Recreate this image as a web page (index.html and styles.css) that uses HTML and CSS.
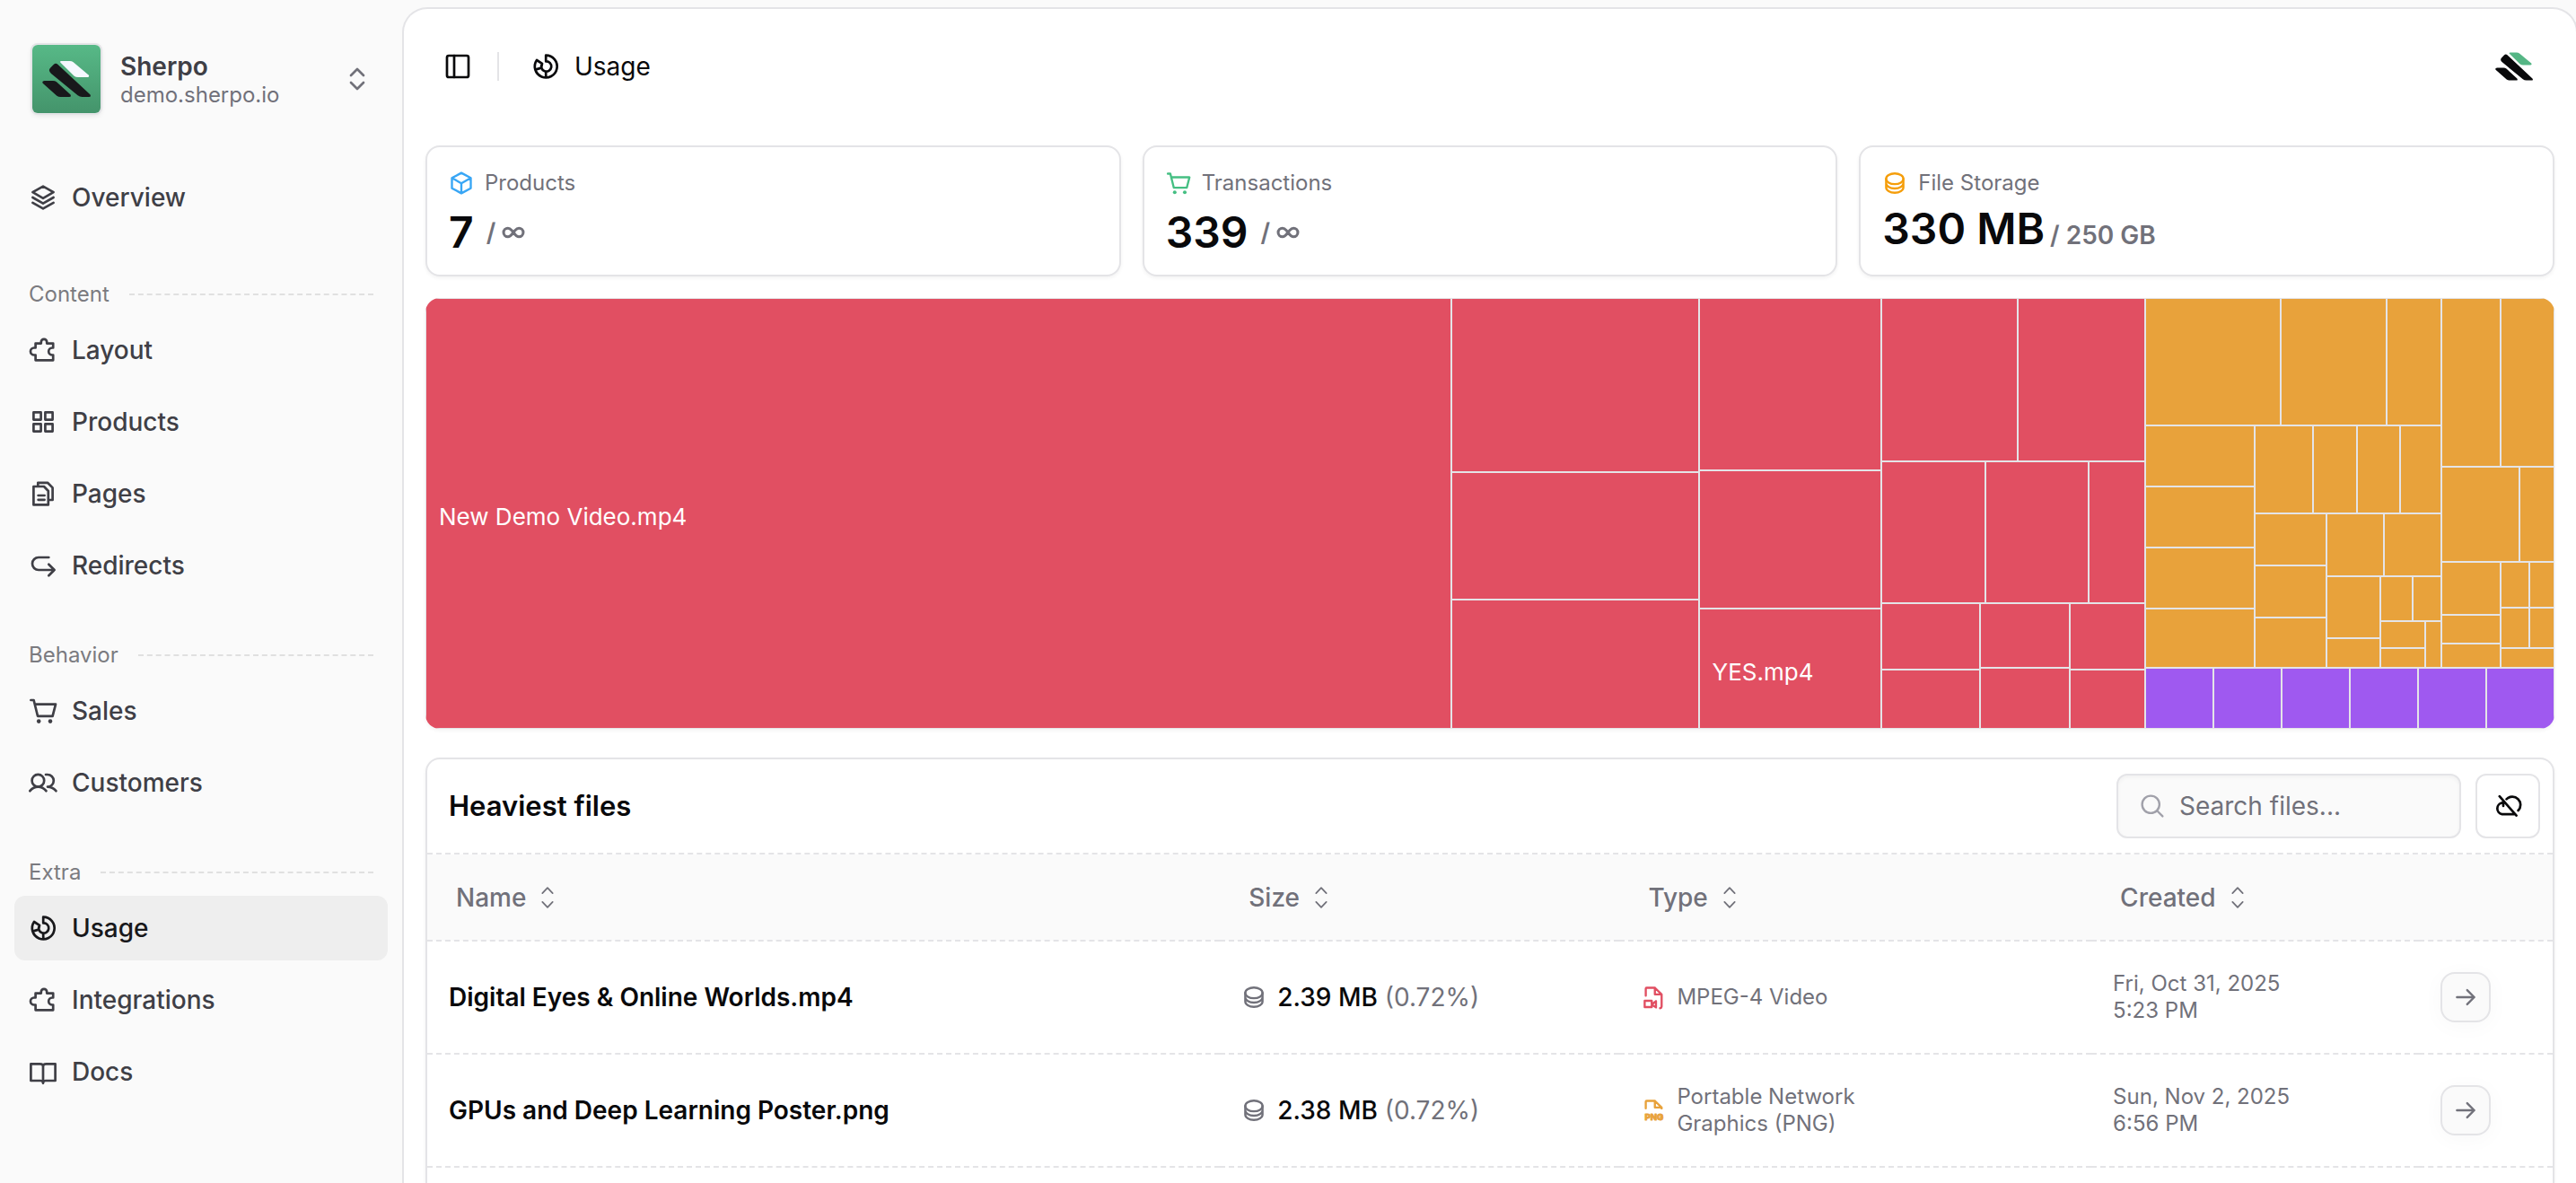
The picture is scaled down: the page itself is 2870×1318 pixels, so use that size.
FILE: index.html
```html
<!DOCTYPE html>
<html lang="en">
<head>
    <meta charset="UTF-8">
    <title>Usage - Sherpo</title>
    <link rel="stylesheet" href="styles.css">
</head>

<body>
    <!-- icon set -->
    <svg class="sprite" aria-hidden="true">
        <symbol id="i-logo" viewBox="0 0 162 120">
            <path class="logo-top" d="M64 0H92Q99 0 104 4L154 46Q160 53 152 54H120Q112 54 107 50L62 6Q57 0 64 0Z"/>
            <path class="logo-base" d="M38 12Q45 5 52 11L160 112Q165 120 156 120H134Q125 120 119 115L30 42Q19 32 27 23ZM8 66H36Q43 66 48 70L94 112Q99 120 90 120H62Q54 120 49 116L2 74Q-2 67 8 66Z"/>
        </symbol>
        <symbol id="i-layers" viewBox="0 0 32 32">
            <path d="M16 3.6 27.6 10.2 16 16.8 4.4 10.2ZM4.4 16 16 22.6 27.6 16M4.4 21.8 16 28.4 27.6 21.8"/>
        </symbol>
        <symbol id="i-puzzle" viewBox="0 0 32 32">
            <path d="M7.6 8.6H13.8V7a3.2 3.2 0 0 1 6.4 0V8.6H27.2V13.5H26.2a4 4 0 0 0 0 8H27.2V27.3H7.6V21.5H6a4 4 0 0 1 0-8H7.6Z"/>
        </symbol>
        <symbol id="i-grid" viewBox="0 0 32 32">
            <path d="M5.4 5.4h8.2v8.2H5.4ZM18.4 5.4h8.2v8.2h-8.2ZM5.4 18.4h8.2v8.2H5.4ZM18.4 18.4h8.2v8.2h-8.2Z"/>
        </symbol>
        <symbol id="i-pages" viewBox="0 0 32 32">
            <path d="M5.4 8H17L21.8 13V28.4H5.4ZM10.3 8V3.8H21L26.6 9.4V23H22M10.6 18h7M10.6 22.8h7"/>
        </symbol>
        <symbol id="i-redirect" viewBox="0 0 32 32">
            <path d="M22.3 7H11a7 7 0 0 0 0 14H28.6M22.3 14.8 28.6 21 22.3 27.3"/>
        </symbol>
        <symbol id="i-cart" viewBox="0 0 32 32">
            <path d="M2.4 4H5.6L10 21.8H26.6L30 8.6H7"/>
            <circle class="dot" cx="11.2" cy="27.6" r="2.3"/>
            <circle class="dot" cx="24" cy="27.6" r="2.3"/>
        </symbol>
        <symbol id="i-users" viewBox="0 0 32 32">
            <circle cx="10.4" cy="13.7" r="6.8"/>
            <path d="M1.4 25.2C4 22 7 20.6 10.4 20.6S16.9 22 19.4 25.2M19 7H21a6.8 6.8 0 0 1 0 13.6C24.6 20.6 27.6 22 30.4 25.2"/>
        </symbol>
        <symbol id="i-usage" viewBox="0 0 32 32">
            <path d="M16.2 3.6A12.4 12.4 0 1 1 6 9L12 12.9A5.6 5.6 0 1 0 16.2 10.4ZM16.2 21.6V28.4M11 17.6 4.4 19.6M12 12.9 11 17.6"/>
        </symbol>
        <symbol id="i-book" viewBox="0 0 32 32">
            <path d="M2.4 7.3H12.5Q16 7.3 16 10Q16 7.3 19.5 7.3H29.6V26H19Q16 26 16 28.8Q16 26 13 26H2.4ZM16 10V28"/>
        </symbol>
        <symbol id="i-panel" viewBox="0 0 32 32">
            <rect x="4" y="4" width="24" height="24" rx="2"/>
            <path d="M12 4V28"/>
        </symbol>
        <symbol id="i-updown" viewBox="0 0 32 32">
            <path d="M9 12 16 5 23 12M9 20 16 27 23 20"/>
        </symbol>
        <symbol id="i-sort" viewBox="0 0 32 32">
            <path d="M9.5 10.5 16 3.5 22.5 10.5M9.5 21.5 16 28.5 22.5 21.5"/>
        </symbol>
        <symbol id="i-box" viewBox="0 0 32 32">
            <path d="M16 3 28 9.5V22.5L16 29 4 22.5V9.5ZM4 9.5 16 16.2 28 9.5M16 16.2V29"/>
        </symbol>
        <symbol id="i-db" viewBox="0 0 32 32">
            <ellipse cx="16" cy="10.5" rx="11" ry="6.8"/>
            <path d="M5 10.5V21.5C5 25.3 9.9 28.3 16 28.3S27 25.3 27 21.5V10.5M5 16C5 19.8 9.9 22.8 16 22.8S27 19.8 27 16"/>
        </symbol>
        <symbol id="i-search" viewBox="0 0 32 32">
            <circle cx="14" cy="14" r="11"/>
            <path d="M22 22 29 29"/>
        </symbol>
        <symbol id="i-cloud-off" viewBox="0 0 32 32">
            <path d="M6.8 5.2 25.6 26.6M9.8 12.4A6.5 6.5 0 0 0 9.6 25.2H24.4M11 10.5V16M14.6 8.4A8.6 8.6 0 0 1 27.6 21"/>
        </symbol>
        <symbol id="i-arrow" viewBox="0 0 32 32">
            <path d="M5 16H27M18 7 27 16 18 25"/>
        </symbol>
        <symbol id="i-infinity" viewBox="0 0 32 32">
            <path d="M16 16C13 11.8 11 10.5 9 10.5a5.5 5.5 0 0 0 0 11C11 21.5 13 20.2 16 16S21 10.5 23 10.5a5.5 5.5 0 0 1 0 11C21 21.5 19 20.2 16 16Z"/>
        </symbol>
        <symbol id="i-file-video" viewBox="0 0 32 32">
            <path d="M6.4 14V5.2Q6.4 4 7.6 4H18L26.6 12.4V28Q26.6 29.6 24.6 30M18 4V12.4H26.6M5 20.6H14V28.6H5ZM14 25.4 19.4 21V29L14 25.4"/>
        </symbol>
        <symbol id="i-file-png" viewBox="0 0 32 32">
            <path d="M6.4 13.5V5.2Q6.4 4 7.6 4H18L26.6 12.4V13.6M18 4V12.4H26.6"/>
            <text class="file-ext" x="17" y="28" text-anchor="middle">PNG</text>
        </symbol>
    </svg>

    <div class="app">
        <aside class="sidebar">
            <button class="store" type="button">
                <span class="store-logo"><svg><use href="#i-logo"/></svg></span>
                <span class="store-text">
                    <strong>Sherpo</strong>
                    <small>demo.sherpo.io</small>
                </span>
                <svg class="icon store-arrows"><use href="#i-updown"/></svg>
            </button>

            <nav class="nav">
                <div class="nav-group nav-first">
                    <a href="#"><svg class="icon"><use href="#i-layers"/></svg>Overview</a>
                </div>
                <div class="nav-group">
                    <h2>Content</h2>
                    <a href="#"><svg class="icon"><use href="#i-puzzle"/></svg>Layout</a>
                    <a href="#"><svg class="icon"><use href="#i-grid"/></svg>Products</a>
                    <a href="#"><svg class="icon"><use href="#i-pages"/></svg>Pages</a>
                    <a href="#"><svg class="icon"><use href="#i-redirect"/></svg>Redirects</a>
                </div>
                <div class="nav-group">
                    <h2>Behavior</h2>
                    <a href="#"><svg class="icon"><use href="#i-cart"/></svg>Sales</a>
                    <a href="#"><svg class="icon"><use href="#i-users"/></svg>Customers</a>
                </div>
                <div class="nav-group">
                    <h2>Extra</h2>
                    <a href="#" class="active"><svg class="icon"><use href="#i-usage"/></svg>Usage</a>
                    <a href="#"><svg class="icon"><use href="#i-puzzle"/></svg>Integrations</a>
                    <a href="#"><svg class="icon"><use href="#i-book"/></svg>Docs</a>
                </div>
            </nav>
        </aside>

        <main class="main">
            <header class="topbar">
                <button type="button" class="toggle" aria-label="Toggle sidebar"><svg class="icon"><use href="#i-panel"/></svg></button>
                <span class="divider"></span>
                <svg class="icon"><use href="#i-usage"/></svg>
                <h1>Usage</h1>
                <a href="#" class="brand" aria-label="Sherpo"><svg><use href="#i-logo"/></svg></a>
            </header>

            <section class="stats">
                <div class="card stat">
                    <div class="stat-label"><svg class="icon blue"><use href="#i-box"/></svg>Products</div>
                    <div class="stat-value unlimited">7 <span class="limit">/ <svg class="icon" role="img" aria-label="unlimited"><use href="#i-infinity"/></svg></span></div>
                </div>
                <div class="card stat">
                    <div class="stat-label"><svg class="icon green"><use href="#i-cart"/></svg>Transactions</div>
                    <div class="stat-value unlimited">339 <span class="limit">/ <svg class="icon" role="img" aria-label="unlimited"><use href="#i-infinity"/></svg></span></div>
                </div>
                <div class="card stat">
                    <div class="stat-label"><svg class="icon orange"><use href="#i-db"/></svg>File Storage</div>
                    <div class="stat-value">330 MB <span class="limit">/ 250 GB</span></div>
                </div>
            </section>

            <div id="treemap" class="treemap"></div>

            <section class="card files">
                <div class="files-head">
                    <h2>Heaviest files</h2>
                    <label class="search">
                        <svg class="icon"><use href="#i-search"/></svg>
                        <input type="text" placeholder="Search files..." aria-label="Search files">
                    </label>
                    <button type="button" class="cloud" aria-label="Unused files"><svg class="icon"><use href="#i-cloud-off"/></svg></button>
                </div>
                <table>
                    <thead>
                        <tr>
                            <th class="c-name"><button type="button">Name<svg class="icon"><use href="#i-sort"/></svg></button></th>
                            <th class="c-size"><button type="button">Size<svg class="icon"><use href="#i-sort"/></svg></button></th>
                            <th class="c-type"><button type="button">Type<svg class="icon"><use href="#i-sort"/></svg></button></th>
                            <th class="c-date"><button type="button">Created<svg class="icon"><use href="#i-sort"/></svg></button></th>
                            <th></th>
                        </tr>
                    </thead>
                    <tbody>
                        <tr>
                            <td class="name">Digital Eyes &amp; Online Worlds.mp4</td>
                            <td><div class="cell"><svg class="icon"><use href="#i-db"/></svg><span class="size"><b>2.39 MB</b> (0.72%)</span></div></td>
                            <td><div class="cell"><svg class="icon red"><use href="#i-file-video"/></svg><span class="type">MPEG-4 Video</span></div></td>
                            <td class="date">Fri, Oct 31, 2025<br>5:23 PM</td>
                            <td><button type="button" class="open" aria-label="Open"><svg class="icon"><use href="#i-arrow"/></svg></button></td>
                        </tr>
                        <tr>
                            <td class="name">GPUs and Deep Learning Poster.png</td>
                            <td><div class="cell"><svg class="icon"><use href="#i-db"/></svg><span class="size"><b>2.38 MB</b> (0.72%)</span></div></td>
                            <td><div class="cell"><svg class="icon amber"><use href="#i-file-png"/></svg><span class="type">Portable Network Graphics (PNG)</span></div></td>
                            <td class="date">Sun, Nov 2, 2025<br>6:56 PM</td>
                            <td><button type="button" class="open" aria-label="Open"><svg class="icon"><use href="#i-arrow"/></svg></button></td>
                        </tr>
                    </tbody>
                </table>
            </section>
        </main>
    </div>

    <script>
        // [size, dir, children] is a split, [size, label] a file, a bare number a file without label
        const video = [1916, 'row', [
            [1142, 'New Demo Video.mp4'],
            [276, 'col', [194, 142, 144]],
            [204, 'col', [192, 154, [134, 'YES.mp4']]],
            [294, 'col', [
                [182, 'row', [152, 142]],
                [158, 'row', [116, 116, 62]],
                [140, 'row', [
                    [110, 'col', [74, 66]],
                    [100, 'col', [72, 68]],
                    [84, 'col', [74, 66]]
                ]]
            ]]
        ]];
        const image = [412, 'row', [
            [330, 'col', [
                [142, 'row', [152, 118, 60]],
                [270, 'row', [
                    [122, 'col', [68, 68, 68, 66]],
                    [208, 'col', [
                        [98, 'row', [66, 48, 48, 46]],
                        [172, 'row', [
                            [80, 'col', [58, 58, 56]],
                            [128, 'col', [
                                [70, 'row', [64, 64]],
                                [102, 'row', [
                                    [60, 'col', [70, 32]],
                                    [68, 'col', [
                                        [50, 'row', [36, 32]],
                                        [52, 'row', [[52, 'col', [30, 22]], 16]]
                                    ]]
                                ]]
                            ]]
                        ]]
                    ]]
                ]]
            ]],
            [126, 'col', [
                [188, 'row', [66, 60]],
                [106, 'row', [88, 38]],
                [118, 'row', [
                    [66, 'col', [60, 32, 26]],
                    [60, 'col', [
                        [52, 'row', [32, 28]],
                        [46, 'row', [32, 28]],
                        20
                    ]]
                ]]
            ]]
        ]];
        const archive = [68, 'row', [76, 76, 76, 76, 76, 76]];

        function draw(node, kind) {
            const item = Array.isArray(node) ? node : [node];
            const el = document.createElement('div');
            el.style.flexGrow = item[0];
            if (item[2]) {
                el.className = 'split ' + item[1];
                item[2].forEach(child => el.appendChild(draw(child, kind)));
            } else {
                el.className = 'file ' + kind;
                if (item[1]) {
                    const label = document.createElement('span');
                    label.textContent = item[1];
                    el.appendChild(label);
                }
            }
            return el;
        }

        const treemap = document.getElementById('treemap');
        const rest = document.createElement('div');
        rest.className = 'split col';
        rest.style.flexGrow = 456;
        rest.appendChild(draw(image, 'image'));
        rest.appendChild(draw(archive, 'archive'));
        treemap.appendChild(draw(video, 'video'));
        treemap.appendChild(rest);
    </script>
</body>
</html>
```

FILE: styles.css
```css
* {
    box-sizing: border-box;
}

body {
    margin: 0;
    background-color: #fafafa;
    color: #09090b;
    font-family: Inter, "Liberation Sans", sans-serif;
    font-size: 28px;
    line-height: 36px;
    overflow: hidden;
}

h1, h2 {
    margin: 0;
}

a {
    color: inherit;
    text-decoration: none;
}

button {
    display: flex;
    align-items: center;
    padding: 0;
    border: none;
    background: none;
    color: inherit;
    font: inherit;
    cursor: pointer;
}

.sprite {
    display: none;
}

.icon {
    flex: none;
    width: 32px;
    height: 32px;
    fill: none;
    stroke: currentColor;
    stroke-width: 2.7;
    stroke-linecap: round;
    stroke-linejoin: round;
}

.dot {
    fill: currentColor;
    stroke: none;
}

.file-ext {
    fill: currentColor;
    stroke-width: 1;
    font-size: 11px;
    font-weight: 800;
}

.blue { color: #38a6f5; }
.green { color: #45bf83; }
.orange { color: #f59e0b; }
.red { color: #e14f62; }
.amber { color: #e8a23b; }

.app {
    display: flex;
    min-height: 100vh;
}

/* sidebar */
.sidebar {
    flex: none;
    width: 448px;
    padding: 50px 16px 0;
    color: #3f3f46;
}

.store {
    width: 100%;
    padding: 0 18px 0 20px;
    text-align: left;
}

.store-logo {
    display: flex;
    align-items: center;
    justify-content: center;
    width: 76px;
    height: 76px;
    border-radius: 6px;
    background: linear-gradient(#57b987, #44946b);
    box-shadow: 0 0 0 2px #e4e4e7, 0 2px 6px rgba(0, 0, 0, 0.12);
}

.store-logo svg {
    width: 54px;
    height: 40px;
    fill: #18181b;
    --logo-top: #f5f8ff;
}

.logo-top {
    fill: var(--logo-top);
}

.store-text {
    flex: 1;
    margin-left: 22px;
    padding-top: 2px;
}

.store-text strong {
    display: block;
    font-weight: 600;
    line-height: 34px;
}

.store-text small {
    display: block;
    color: #71717a;
    font-size: 24px;
    line-height: 30px;
}

.store-arrows {
    color: #71717a;
}

.nav {
    display: flex;
    flex-direction: column;
    gap: 38px;
    margin-top: 58px;
}

.nav-first {
    margin-bottom: 8px;
}

.nav-group h2 {
    display: flex;
    align-items: center;
    gap: 22px;
    height: 52px;
    padding: 0 16px;
    color: #7b7b80;
    font-size: 24px;
    font-weight: 400;
}

.nav-group h2::after {
    content: "";
    flex: 1;
    border-top: 2px dashed #e0e0e0;
}

.nav-group a {
    display: flex;
    align-items: center;
    gap: 16px;
    height: 72px;
    padding: 0 16px;
    border-radius: 12px;
    font-weight: 500;
}

.nav-group a + a {
    margin-top: 8px;
}

.nav-group a.active {
    background-color: #eeeeee;
    color: #18181b;
}

/* main panel, its right border runs past the window edge */
.main {
    flex: 1;
    display: flex;
    flex-direction: column;
    min-width: 0;
    margin: 8px -2px 0 0;
    padding: 0 24px;
    border: 2px solid #e4e4e7;
    border-bottom: none;
    border-radius: 28px 28px 0 0;
    background-color: #ffffff;
}

.topbar {
    display: flex;
    align-items: center;
    height: 128px;
    padding: 0 24px 0 20px;
}

.divider {
    width: 2px;
    height: 32px;
    margin: 0 36px 0 28px;
    background-color: #e4e4e7;
}

.topbar h1 {
    margin-left: 16px;
    font-size: 28px;
    font-weight: 400;
}

.brand {
    display: flex;
    margin-left: auto;
}

.brand svg {
    width: 42px;
    height: 32px;
    fill: #09090b;
    --logo-top: #55b685;
}

.card {
    border: 2px solid #e4e4e7;
    border-radius: 16px;
    background-color: #ffffff;
    box-shadow: 0 2px 4px rgba(0, 0, 0, 0.05);
}

.stats {
    display: grid;
    grid-template-columns: repeat(3, 1fr);
    gap: 24px;
    margin-top: 24px;
}

.stat {
    padding: 24px 24px 16px;
}

.stat-label {
    display: flex;
    align-items: center;
    gap: 12px;
    color: #71717a;
    font-size: 24px;
    line-height: 32px;
}

.stat-label .icon {
    width: 28px;
    height: 28px;
}

.stat-value {
    display: flex;
    align-items: baseline;
    gap: 6px;
    margin-top: 8px;
    font-size: 48px;
    font-weight: 600;
    line-height: 54px;
}

.stat-value.unlimited {
    align-items: center;
    gap: 14px;
    line-height: 62px;
}

.limit {
    display: flex;
    align-items: center;
    gap: 6px;
    color: #71717a;
    font-size: 28px;
    line-height: 36px;
}

.limit .icon {
    width: 28px;
    height: 28px;
    stroke-width: 3.5;
}

/* treemap */
.treemap {
    display: flex;
    height: 480px;
    margin-top: 24px;
    border-radius: 16px;
    overflow: hidden;
    box-shadow: 0 2px 4px rgba(0, 0, 0, 0.05);
}

.split {
    display: flex;
    flex-basis: 0;
    min-width: 0;
    min-height: 0;
}

.col {
    flex-direction: column;
}

.file {
    display: flex;
    align-items: center;
    flex-basis: 0;
    min-width: 0;
    min-height: 0;
    border: 1px solid #e4e4e7;
    color: #ffffff;
    font-size: 26px;
    white-space: nowrap;
}

.file span {
    padding: 8px 0 0 14px;
}

.video { background-color: #e14f62; }
.image { background-color: #e8a23b; }
.archive { background-color: #9f59f0; }

/* files */
.files {
    flex: 1;
    margin-top: 32px;
    border-bottom: none;
    border-radius: 16px 16px 0 0;
    overflow: hidden;
}

.files-head {
    display: flex;
    align-items: center;
    gap: 16px;
    padding: 16px 14px 16px 24px;
    border-bottom: 2px dashed #e4e4e7;
}

.files-head h2 {
    margin-right: auto;
    font-size: 31px;
    font-weight: 600;
}

.search {
    display: flex;
    align-items: center;
    gap: 16px;
    width: 384px;
    height: 72px;
    padding: 0 24px;
    border: 2px solid #e4e4e7;
    border-radius: 12px;
    background-color: #fafafa;
    box-shadow: inset 0 2px 4px rgba(0, 0, 0, 0.04);
    color: #a1a1aa;
}

.search .icon {
    width: 28px;
    height: 28px;
}

.search input {
    flex: 1;
    min-width: 0;
    padding: 0;
    border: none;
    outline: none;
    background: none;
    color: #09090b;
    font: inherit;
}

.search input::placeholder {
    color: #71717a;
    opacity: 1;
}

.cloud {
    justify-content: center;
    width: 72px;
    height: 72px;
    border: 2px solid #e4e4e7;
    border-radius: 12px;
}

table {
    width: 100%;
    border-collapse: collapse;
    table-layout: fixed;
}

.c-name { width: 37.3%; }
.c-size { width: 18.8%; }
.c-type { width: 22.2%; }
.c-date { width: 15.4%; }

th, td {
    padding: 0 24px;
    border-bottom: 2px dashed #e4e4e7;
    text-align: left;
}

th {
    height: 96px;
    background-color: #fafafa;
    color: #71717a;
    font-weight: 500;
}

th button {
    gap: 10px;
    padding: 0 8px;
}

th .icon {
    width: 28px;
    height: 28px;
    stroke-width: 2;
}

td {
    height: 126px;
    color: #71717a;
}

.name {
    color: #09090b;
    font-weight: 600;
}

.cell {
    display: flex;
    align-items: center;
    gap: 12px;
}

.cell .icon {
    width: 28px;
    height: 28px;
}

.size b {
    color: #09090b;
    font-weight: 500;
}

.type, .date {
    font-size: 24px;
    line-height: 30px;
}

.type {
    max-width: 240px;
}

.open {
    justify-content: center;
    width: 56px;
    height: 56px;
    border: 2px solid #e4e4e7;
    border-radius: 16px;
    background-color: #fafafa;
    box-shadow: 0 4px 24px rgba(0, 0, 0, 0.03);
}

.open .icon {
    width: 28px;
    height: 28px;
}
```
